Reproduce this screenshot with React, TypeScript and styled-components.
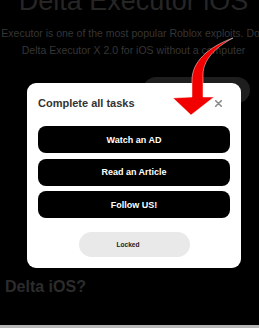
import React from "react";
import styled, { createGlobalStyle } from "styled-components";

const GlobalStyle = createGlobalStyle`
  html, body {
    margin: 0;
    padding: 0;
    background: #000;
    overflow: hidden;
  }
  body {
    font-family: "Liberation Sans", Arial, sans-serif;
  }
`;

const Page = styled.div`
  position: relative;
  width: 259px;
  height: 328px;
  overflow: hidden;
  background: #000;
  display: flex;
  flex-direction: column;
`;

const Hero = styled.section`
  display: flex;
  flex-direction: column;
  align-items: center;
  padding-left: 8px;
`;

const Title = styled.h1`
  margin: -12px 0 0;
  font-size: 27px;
  line-height: 27px;
  font-weight: 400;
  color: #262626;
  white-space: nowrap;
`;

const Lead = styled.p`
  margin: 9.5px 0 0;
  font-size: 10.5px;
  line-height: 17px;
  color: #363636;
  white-space: nowrap;
  text-align: center;
`;

const ActionRow = styled.div`
  display: flex;
  justify-content: flex-end;
  padding-right: 9px;
  margin-top: 18.5px;
`;

const Pill = styled.div`
  width: 107px;
  height: 26px;
  border-radius: 13px;
  background: #1e1e1e;
`;

const SubHeading = styled.h2`
  margin: 174px 0 0;
  padding-left: 5px;
  font-size: 16px;
  line-height: 20px;
  font-weight: 700;
  color: #2c2c2c;
  white-space: nowrap;
`;

const FooterEdge = styled.div`
  margin-top: auto;
  height: 3px;
  background: #b8b8b8;
`;

const Overlay = styled.div`
  position: absolute;
  inset: 0;
  display: flex;
  align-items: flex-start;
  padding: 83px 0 0 27px;
`;

const Modal = styled.div`
  width: 214px;
  background: #fff;
  border-radius: 9px;
  padding: 0 11px 11px;
  box-sizing: border-box;
  display: flex;
  flex-direction: column;
`;

const Header = styled.div`
  height: 40px;
  margin-bottom: 3px;
  display: flex;
  align-items: center;
  justify-content: space-between;
`;

const ModalTitle = styled.span`
  font-size: 11px;
  font-weight: 700;
  color: #333;
`;

const CloseButton = styled.span`
  display: flex;
  margin-right: 8px;
`;

const TaskList = styled.div`
  display: flex;
  flex-direction: column;
  gap: 5.5px;
`;

const TaskButton = styled.div`
  height: 27px;
  border-radius: 8px;
  background: #000;
  color: #fff;
  font-size: 9px;
  font-weight: 700;
  display: flex;
  align-items: center;
  justify-content: center;
`;

const LockedButton = styled.div`
  align-self: center;
  margin-top: 14px;
  width: 111px;
  height: 25px;
  border-radius: 13px;
  background: #e9e9e9;
  color: #222;
  font-size: 6.6px;
  font-weight: 700;
  display: flex;
  align-items: center;
  justify-content: center;
  padding-right: 12px;
  box-sizing: border-box;
`;

const ArrowLayer = styled.svg`
  position: absolute;
  left: 0;
  top: 0;
  pointer-events: none;
`;

const tasks = ["Watch an AD", "Read an Article", "Follow US!"];

export default function App() {
  return (
    <Page>
      <GlobalStyle />
      <Hero>
        <Title>Delta Executor iOS</Title>
        <Lead>
          Delta Executor is one of the most popular Roblox exploits. Download
          <br />
          Delta Executor X 2.0 for iOS without a computer
        </Lead>
      </Hero>
      <ActionRow>
        <Pill />
      </ActionRow>
      <SubHeading>Delta iOS?</SubHeading>
      <FooterEdge />

      <Overlay>
        <Modal>
          <Header>
            <ModalTitle>Complete all tasks</ModalTitle>
            <CloseButton>
              <svg width="7" height="7" viewBox="0 0 7 7">
                <path d="M0.7 0.7 L6.3 6.3 M6.3 0.7 L0.7 6.3" stroke="#8a8a8a" strokeWidth="1.6" strokeLinecap="round" />
              </svg>
            </CloseButton>
          </Header>
          <TaskList>
            {tasks.map((t) => (
              <TaskButton key={t}>{t}</TaskButton>
            ))}
          </TaskList>
          <LockedButton>Locked</LockedButton>
        </Modal>
      </Overlay>

      <ArrowLayer width="259" height="328" viewBox="0 0 259 328">
        <path
          d="M233 38 C220 45 203 57 203 75 L203 97 L214 97 L191 115 L173 98 L192 97 L192 80 C192 62 208 47 233 38 Z"
          fill="#f20000"
          stroke="#ffffff"
          strokeOpacity="0.6"
          strokeWidth="0.8"
          strokeLinejoin="round"
        />
      </ArrowLayer>
    </Page>
  );
}
